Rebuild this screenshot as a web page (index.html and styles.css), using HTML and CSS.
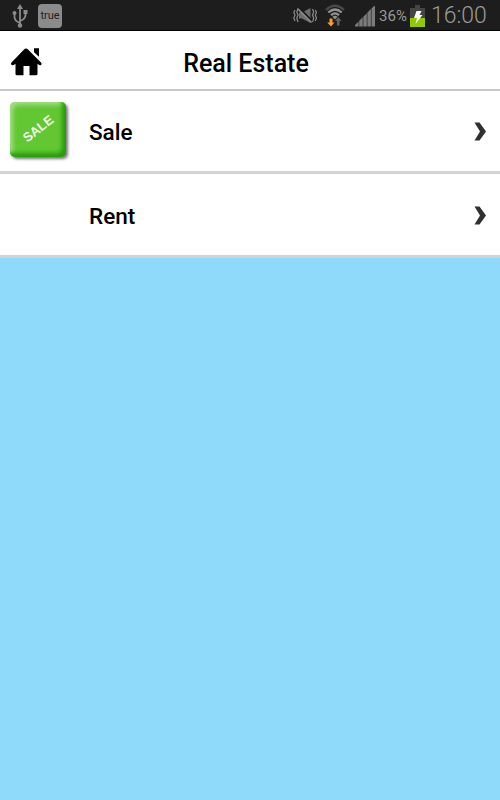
FILE: index.html
```
<!DOCTYPE html>
<html lang="en">
<head>
<meta charset="utf-8">
<title>Real Estate</title>
<link rel="stylesheet" href="styles.css">
</head>
<body>
<div class="status">
  <svg class="usb" width="18" height="26" viewBox="0 0 18 26" fill="none" stroke="#8b8b8b" stroke-width="1.8">
    <path d="M8 23V4M8 19Q2.500 17 2.500 13V10M8 17Q13.500 15 13.500 11V9"/>
    <path d="M8 0L11 5H5Z" fill="#8b8b8b" stroke="none"/>
    <circle cx="8" cy="21.500" r="2.200" fill="#8b8b8b" stroke="none"/>
    <circle cx="2.500" cy="9" r="2" fill="#8b8b8b" stroke="none"/>
    <path d="M11.500 6h4v4h-4z" fill="#8b8b8b" stroke="none"/>
  </svg>
  <span class="app">true</span>
  <svg class="vibrate" width="24" height="18" viewBox="0 0 24 18" fill="none" stroke="#858585" stroke-width="1.300">
    <path d="M2 3l-1.200 2.500L2 8l-1.200 3L2 14M5 2L3.800 5 5 8l-1.200 3L5 15M19.500 2l1.200 3-1.200 3 1.200 3-1.200 4M22.300 3l1.200 2.500L22.300 8l1.200 3-1.200 3"/>
    <path d="M6 5.500h3L17.500 1v15L9 11.500H6Z" fill="#6d6d6d" stroke="none"/>
    <path d="M6 0.500L19 14" stroke="#1d1d1d" stroke-width="2"/>
    <path d="M4.500 1.500L18.500 15.500" stroke="#8d8d8d" stroke-width="1.600"/>
  </svg>
  <svg class="wifi" width="20" height="24" viewBox="0 0 20 24" fill="none" stroke-width="2.200">
    <path d="M1 6Q10-2.500 19 6" stroke="#494949"/>
    <path d="M3.300 8.500Q10 2.500 16.700 8.500M6 11.200Q10 7.500 14 11.200" stroke="#929292"/>
    <path d="M7.500 12.700Q10 10.700 12.500 12.700L10 15.500Z" fill="#929292"/>
    <path d="M4.500 14.500h3v4H9.500L6 22.500 2.200 18.500h2.300Z" fill="#ff9b20"/>
    <path d="M12 21.500h2.500V17h2L13.200 13 10 17h2Z" fill="#626262"/>
  </svg>
  <svg class="signal" width="21" height="21" viewBox="0 0 21 21" fill="#7b7b7b">
    <path d="M0 20.500v-1.500l3.600-3.600v5.100ZM4.200 20.500v-5.700l3.500-3.500v9.200ZM8.300 20.500v-9.800l3.500-3.500v13.300ZM12.400 20.500V6.600l3.500-3.500v17.400ZM16.500 20.500V2.500L19 0h1v20.500Z"/>
  </svg>
  <span class="percent">36%</span>
  <svg class="battery" width="15" height="22" viewBox="0 0 15 22">
    <path d="M0 3h5V0h5v3h5v19H0Z" fill="#454545"/>
    <path d="M0 13h15v9H0Z" fill="#91ca00"/>
    <path d="M6.500 6H11.500L9.500 10h3L5.500 19l1.500-6H4Z" fill="#fff"/>
  </svg>
  <time class="clock">16:00</time>
</div>
<header class="header">
  <svg class="home" width="34" height="30" viewBox="0 0 34 30">
    <path d="M16 1.500Q17 1.500 18 2.500L31 15.500Q32.500 17 31 18Q30 18.700 28.500 17.600L27.500 16.700V27Q27.500 28.300 26 28.300H19.500V19H13.500V28.300H7Q5.500 28.300 5.500 27V16.700L4.500 17.600Q3 18.700 1.800 18Q0 17 1.500 15.500L14 2.500Q15 1.500 16 1.500ZM24 1.200h5v8.500l-5-4.500Z"/>
  </svg>
  <h1 class="title">Real Estate</h1>
</header>
<main>
  <div class="row sale">
    <div class="thumb"><span class="tile"><span class="tag">SALE</span></span></div>
    <span class="label">Sale</span>
    <svg class="chevron" width="13" height="19" viewBox="0 0 13 19"><path d="M0.500 0.500H5.500L12 9.500 5.500 18.500H0.500L6 9.500Z" fill="#303030"/></svg>
  </div>
  <div class="row rent">
    <div class="thumb"></div>
    <span class="label">Rent</span>
    <svg class="chevron" width="13" height="19" viewBox="0 0 13 19"><path d="M0.500 0.500H5.500L12 9.500 5.500 18.500H0.500L6 9.500Z" fill="#303030"/></svg>
  </div>
</main>
</body>
</html>
```
FILE: styles.css
```
* { box-sizing: border-box; }
body {
  margin: 0;
  height: 800px;
  overflow: hidden;
  background: #8fd9fa;
  color: #000;
  font-family: Roboto, sans-serif;
}
svg { display: block; flex: none; }
.status {
  display: flex;
  align-items: flex-start;
  height: 31px;
  padding-left: 12px;
  background: #1d1d1d;
  border-bottom: 1px solid #000;
  color: #999;
}
.usb { margin-top: 4px; }
.app {
  width: 24px;
  height: 24px;
  margin: 4px 0 0 8px;
  border-radius: 4px;
  background: #8b8b8b;
  color: #1f1f1f;
  font-size: 11px;
  line-height: 23px;
  text-align: center;
}
.vibrate { margin: 7px 0 0 231px; }
.wifi { margin: 4px 0 0 8px; }
.signal { margin: 6px 0 0 10px; }
.percent {
  width: 32px;
  margin-left: 3px;
  font-size: 15px;
  line-height: 33px;
  letter-spacing: 0.1px;
}
.battery { margin: 5px 0 0 -1px; }
.clock {
  margin-left: 6px;
  font-size: 23px;
  font-weight: 350;
  line-height: 32px;
}
.header {
  display: grid;
  grid-template-columns: 44px 1fr 62px;
  height: 60px;
  padding-left: 10px;
  background: #fff;
  border-bottom: 2px solid #c9c9c9;
}
.home { margin-top: 16px; }
.title {
  margin: 0;
  font-size: 25px;
  font-weight: 500;
  line-height: 65px;
  text-align: center;
}
.row {
  display: flex;
  align-items: center;
  padding: 0 13px 0 10px;
  background: #fff;
  border-bottom: 3px solid #d2d2d2;
}
.sale { height: 83px; }
.rent { height: 84px; }
.thumb { width: 79px; }
.tile {
  display: flex;
  align-items: center;
  justify-content: center;
  width: 56px;
  height: 55px;
  margin-top: -4px;
  border-radius: 5px;
  background: #62c733;
  box-shadow: inset -4px -4px 4px #259d08, inset 3px 3px 4px #a4df87, 2px 2px 3px #777;
}
.tag {
  color: #effae9;
  font: bold 13px/16px "Liberation Sans", sans-serif;
  transform: rotate(-38deg);
}
.label {
  flex: 1;
  font-size: 22.5px;
  font-weight: 500;
  line-height: 30px;
}
.sale .label { padding-top: 2px; }
.rent .label { padding-top: 3px; }
.rent .chevron { margin-top: 1px; }
```
